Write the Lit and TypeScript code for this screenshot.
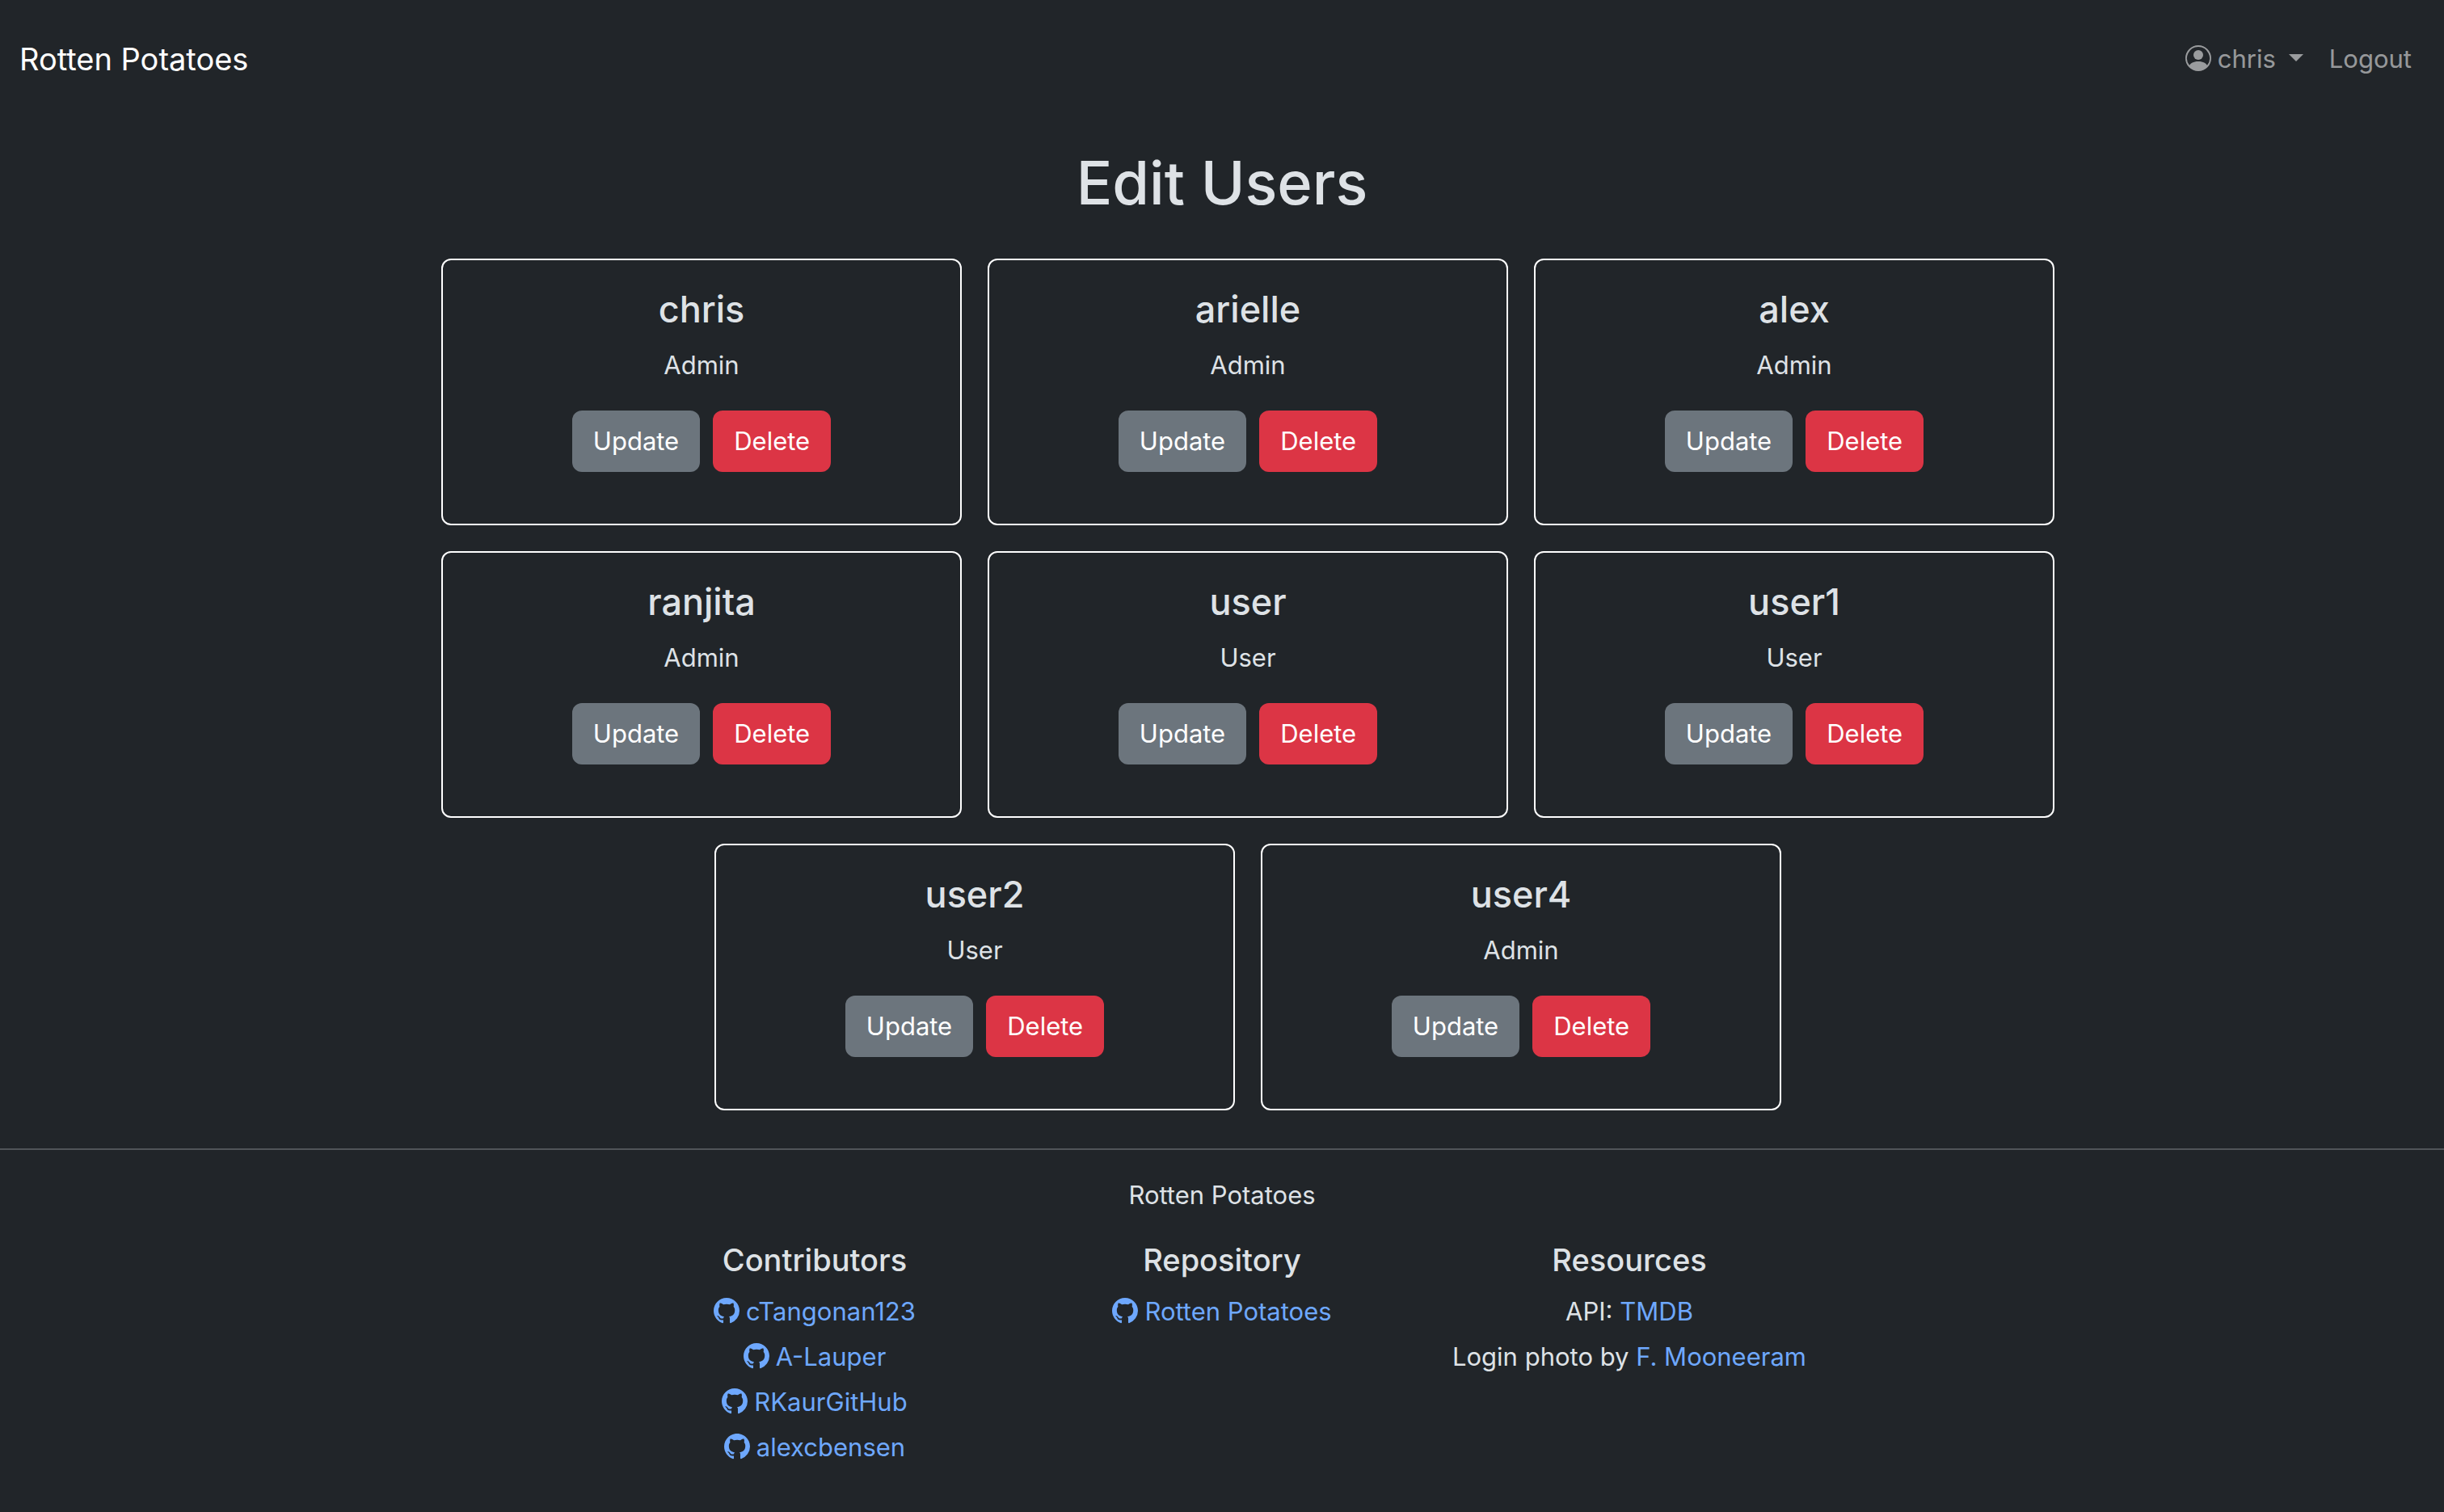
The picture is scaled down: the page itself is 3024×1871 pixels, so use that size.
import { LitElement, html, css } from "lit";
import { customElement, property } from "lit/decorators.js";

interface User {
  name: string;
  role: "Admin" | "User";
}

const USERS: User[] = [
  { name: "chris", role: "Admin" },
  { name: "arielle", role: "Admin" },
  { name: "alex", role: "Admin" },
  { name: "ranjita", role: "Admin" },
  { name: "user", role: "User" },
  { name: "user1", role: "User" },
  { name: "user2", role: "User" },
  { name: "user4", role: "Admin" },
];

const CONTRIBUTORS = ["cTangonan123", "A-Lauper", "RKaurGitHub", "alexcbensen"];

const githubIcon = html`<svg class="icon" viewBox="0 0 16 16" fill="currentColor" aria-hidden="true">
  <path d="M8 0C3.58 0 0 3.58 0 8c0 3.54 2.29 6.53 5.47 7.59.4.07.55-.17.55-.38 0-.19-.01-.82-.01-1.49-2.01.37-2.53-.49-2.69-.94-.09-.23-.48-.94-.82-1.13-.28-.15-.68-.52-.01-.53.63-.01 1.08.58 1.23.82.72 1.21 1.87.87 2.33.66.07-.52.28-.87.51-1.07-1.78-.2-3.64-.89-3.64-3.95 0-.87.31-1.59.82-2.15-.08-.2-.36-1.02.08-2.12 0 0 .67-.21 2.2.82.64-.18 1.32-.27 2-.27s1.36.09 2 .27c1.53-1.04 2.2-.82 2.2-.82.44 1.1.16 1.92.08 2.12.51.56.82 1.27.82 2.15 0 3.07-1.87 3.75-3.65 3.95.29.25.54.73.54 1.48 0 1.07-.01 1.93-.01 2.2 0 .21.15.46.55.38A8.01 8.01 0 0 0 16 8c0-4.42-3.58-8-8-8"></path>
</svg>`;

const personIcon = html`<svg class="icon" viewBox="0 0 16 16" fill="currentColor" aria-hidden="true">
  <path d="M11 6a3 3 0 1 1-6 0 3 3 0 0 1 6 0"></path>
  <path fill-rule="evenodd" d="M0 8a8 8 0 1 1 16 0A8 8 0 0 1 0 8m8-7a7 7 0 0 0-5.468 11.37C3.242 11.226 4.805 10 8 10s4.757 1.225 5.468 2.37A7 7 0 0 0 8 1"></path>
</svg>`;

const shared = css`
  * {
    box-sizing: border-box;
  }
  h1,
  h2,
  p,
  ul {
    margin: 0;
    padding: 0;
  }
  ul {
    list-style: none;
  }
  a {
    text-decoration: none;
  }
  button {
    font: inherit;
    cursor: pointer;
  }
  .icon {
    width: 32px;
    height: 32px;
    margin-right: 8px;
    vertical-align: -4px;
  }
`;

@customElement("site-nav")
export class SiteNav extends LitElement {
  static styles = [
    shared,
    css`
      :host {
        display: block;
      }
      .bar {
        display: flex;
        align-items: center;
        justify-content: space-between;
        min-height: 146px;
        padding: 16px 24px;
      }
      .brand {
        color: #fff;
        font-size: 38px;
        line-height: 60px;
      }
      .links {
        display: flex;
      }
      .link {
        display: block;
        padding: 16px;
        border: 0;
        background: none;
        color: rgba(255, 255, 255, 0.55);
        line-height: 48px;
      }
      .caret {
        display: inline-block;
        margin-left: 16px;
        vertical-align: 8px;
        border: 9px solid transparent;
        border-top-color: currentColor;
        border-bottom: 0;
      }
    `,
  ];

  render() {
    return html`
      <nav class="bar">
        <a class="brand" href="#">Rotten Potatoes</a>
        <ul class="links">
          <li>
            <button class="link" type="button" aria-haspopup="true" aria-expanded="false">
              ${personIcon}chris<span class="caret"></span>
            </button>
          </li>
          <li><a class="link" href="#">Logout</a></li>
        </ul>
      </nav>
    `;
  }
}

@customElement("user-card")
export class UserCard extends LitElement {
  @property({ attribute: false }) user!: User;

  static styles = [
    shared,
    css`
      :host {
        display: block;
      }
      .card {
        padding: 32px 32px 64px;
        border: 2px solid #fff;
        border-radius: 12px;
        text-align: center;
      }
      .name {
        font-size: 45px;
        font-weight: 500;
        line-height: 58px;
      }
      .role {
        margin: 16px 0 32px;
      }
      .actions {
        display: flex;
        justify-content: center;
        gap: 16px;
      }
      .btn {
        padding: 14px 26px;
        border: 0;
        border-radius: 12px;
        background: #6c757d;
        color: #fff;
        line-height: 48px;
      }
      .danger {
        background: #dc3545;
      }
    `,
  ];

  render() {
    return html`
      <article class="card">
        <h2 class="name">${this.user.name}</h2>
        <p class="role">${this.user.role}</p>
        <div class="actions">
          <button class="btn" type="button">Update</button>
          <button class="btn danger" type="button">Delete</button>
        </div>
      </article>
    `;
  }
}

@customElement("site-footer")
export class SiteFooter extends LitElement {
  static styles = [
    shared,
    css`
      :host {
        display: block;
      }
      .footer {
        padding: 32px 0 64px;
        border-top: 2px solid rgba(222, 226, 230, 0.25);
        text-align: center;
      }
      .columns {
        display: grid;
        grid-template-columns: repeat(3, 1fr);
        width: 50%;
        margin: 32px auto 0;
      }
      .heading {
        margin-bottom: 16px;
        font-size: 38px;
        font-weight: 500;
        line-height: 48px;
      }
      .list {
        display: grid;
        gap: 8px;
        white-space: nowrap;
      }
      .list a {
        color: #6ea8fe;
      }
    `,
  ];

  render() {
    return html`
      <footer class="footer">
        <p>Rotten Potatoes</p>
        <div class="columns">
          <section>
            <h2 class="heading">Contributors</h2>
            <ul class="list">
              ${CONTRIBUTORS.map((name) => html`<li><a href="#">${githubIcon}${name}</a></li>`)}
            </ul>
          </section>
          <section>
            <h2 class="heading">Repository</h2>
            <ul class="list">
              <li><a href="#">${githubIcon}Rotten Potatoes</a></li>
            </ul>
          </section>
          <section>
            <h2 class="heading">Resources</h2>
            <ul class="list">
              <li>API: <a href="#">TMDB</a></li>
              <li>Login photo by <a href="#">F. Mooneeram</a></li>
            </ul>
          </section>
        </div>
      </footer>
    `;
  }
}

@customElement("app-root")
export class AppRoot extends LitElement {
  static styles = [
    shared,
    css`
      :host {
        display: block;
        min-height: 100vh;
        background: #212529;
        color: #dee2e6;
        font-family: Inter, "Liberation Sans", sans-serif;
        font-size: 31px;
        line-height: 48px;
      }
      .title {
        padding: 32px 0 46px;
        font-size: 74px;
        font-weight: 500;
        line-height: 96px;
        text-align: center;
      }
      .users {
        display: flex;
        flex-wrap: wrap;
        justify-content: center;
        gap: 32px;
        max-width: 2112px;
        margin: 0 auto;
        padding: 0 0 47px 64px;
      }
      .user {
        flex: 0 1 644px;
      }
    `,
  ];

  render() {
    return html`
      <site-nav></site-nav>
      <main>
        <h1 class="title">Edit Users</h1>
        <div class="users">
          ${USERS.map((user) => html`<user-card class="user" .user=${user}></user-card>`)}
        </div>
      </main>
      <site-footer></site-footer>
    `;
  }
}
